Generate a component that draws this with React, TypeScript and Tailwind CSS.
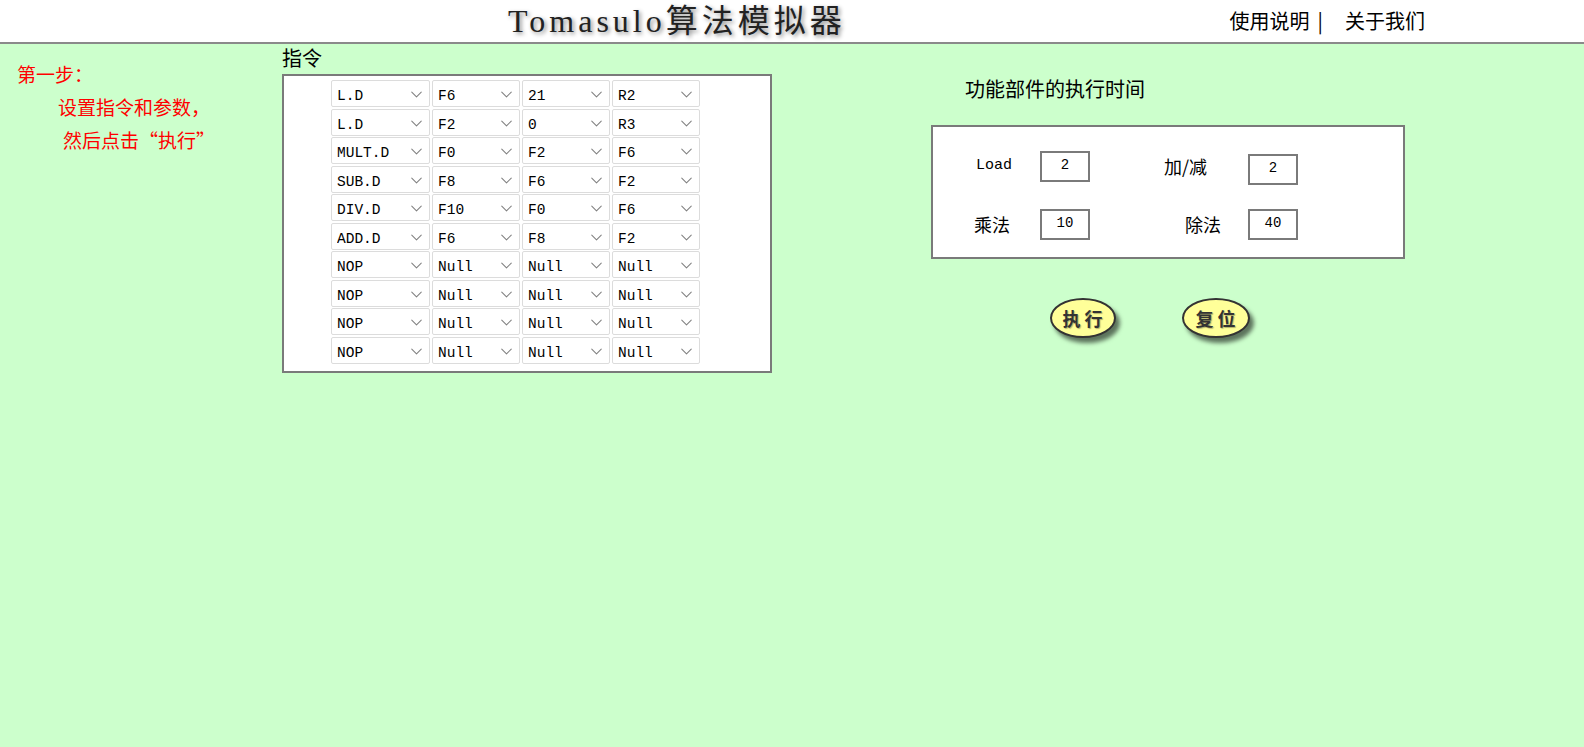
import React from "react";
import { ChevronDown } from "lucide-react";

const ops = ["NOP", "L.D", "S.D", "ADD.D", "SUB.D", "MULT.D", "DIV.D"];
const regs = ["Null", "F0", "F2", "F4", "F6", "F8", "F10", "F12", "F14", "R0", "R1", "R2", "R3", "0", "21"];

const rows = [
  ["L.D", "F6", "21", "R2"],
  ["L.D", "F2", "0", "R3"],
  ["MULT.D", "F0", "F2", "F6"],
  ["SUB.D", "F8", "F6", "F2"],
  ["DIV.D", "F10", "F0", "F6"],
  ["ADD.D", "F6", "F8", "F2"],
  ["NOP", "Null", "Null", "Null"],
  ["NOP", "Null", "Null", "Null"],
  ["NOP", "Null", "Null", "Null"],
  ["NOP", "Null", "Null", "Null"],
];

const Pick: React.FC<{ value: string; options: string[] }> = ({ value, options }) => (
  <div className="relative h-[27px] rounded-[2px] border border-[#dcdcdc] bg-white">
    <select
      defaultValue={value}
      className="h-full w-full appearance-none bg-transparent pl-[5px] pt-[2px] font-['Liberation_Mono',monospace] text-[14.5px] text-black outline-none"
    >
      {options.map((o) => (
        <option key={o} value={o}>
          {o}
        </option>
      ))}
    </select>
    <ChevronDown
      size={19}
      strokeWidth={1.3}
      className="pointer-events-none absolute right-[3px] top-[4px] text-[#808080]"
    />
  </div>
);

const TimeBox: React.FC<{ value: string; extra?: string }> = ({ value, extra }) => (
  <input
    defaultValue={value}
    className={
      "h-[31px] w-[50px] border-2 border-[#7a7a7a] bg-white pb-[4px] text-center font-['Liberation_Mono',monospace] text-[14px] text-black outline-none " +
      (extra ?? "")
    }
  />
);

const App: React.FC = () => {
  return (
    <div className="min-h-screen bg-[#ccffcc] font-['Noto_Sans_CJK_SC',sans-serif] text-black">
      {/* header */}
      <header className="flex h-[44px] items-center border-b-2 border-[#8a8a8a] bg-white">
        <h1 className="ml-[508px] font-['Liberation_Serif','Noto_Sans_CJK_SC',serif] text-[32px] leading-[42px] tracking-[4px] text-[#222] [text-shadow:2px_2px_4px_rgba(0,0,0,0.45)]">
          Tomasulo算法模拟器
        </h1>
        <nav className="ml-auto mr-[159px] flex items-center text-[20px] leading-[24px]">
          <a href="#">使用说明</a>
          <span className="ml-[8px]">|</span>
          <a href="#" className="ml-[22px]">
            关于我们
          </a>
        </nav>
      </header>

      <main className="flex items-start">
        {/* step hint */}
        <section className="w-[282px] shrink-0 pt-[13px] text-[19px] leading-[33px] text-[#ff0000]">
          <p className="pl-[17px]">第一步：</p>
          <p className="pl-[58px]">设置指令和参数，</p>
          <p className="pl-[63px]">然后点击“执行”</p>
        </section>

        {/* instructions */}
        <section className="w-[490px] shrink-0 pt-[4px]">
          <h2 className="mb-[6px] text-[20px] leading-[20px]">指令</h2>
          <div className="h-[299px] border-2 border-[#7a7a7a] bg-white pl-[47px] pt-[4px]">
            <div className="grid grid-cols-[99px_88px_88px_88px] gap-x-[2px] gap-y-[1.5px]">
              {rows.map((r, i) => (
                <React.Fragment key={i}>
                  <Pick value={r[0]} options={ops} />
                  <Pick value={r[1]} options={regs} />
                  <Pick value={r[2]} options={regs} />
                  <Pick value={r[3]} options={regs} />
                </React.Fragment>
              ))}
            </div>
          </div>
        </section>

        {/* unit timing */}
        <section className="ml-[159px] shrink-0 pt-[35px]">
          <h2 className="mb-[26px] pl-[34px] text-[20px] leading-[20px]">功能部件的执行时间</h2>
          <div className="h-[134px] w-[474px] border-2 border-[#7a7a7a] bg-white">
            <div className="mt-[21px] grid grid-cols-[107px_50px_158px_50px] items-center">
              <span className="pl-[43px] font-['Liberation_Mono',monospace] text-[15px]">Load</span>
              <TimeBox value="2" />
              <span className="pl-[74px] text-[18px]">加/减</span>
              <TimeBox value="2" extra="mt-[6px]" />
            </div>
            <div className="mt-[24px] grid grid-cols-[107px_50px_158px_50px] items-center">
              <span className="pl-[41px] text-[18px]">乘法</span>
              <TimeBox value="10" />
              <span className="pl-[95px] text-[18px]">除法</span>
              <TimeBox value="40" />
            </div>
          </div>

          <div className="mt-[39px] flex gap-[66px] pl-[119px]">
            <button className="h-[40px] w-[66px] rounded-[50%] border-2 border-[#333] bg-[#ffff99] pl-[3px] text-[18px] font-semibold tracking-[4px] text-[#333] shadow-[4px_5px_4px_rgba(0,0,0,0.55)] [text-shadow:1px_1px_1px_rgba(0,0,0,0.3)]">
              执行
            </button>
            <button className="h-[40px] w-[68px] rounded-[50%] border-2 border-[#333] bg-[#ffff99] pl-[3px] text-[18px] font-semibold tracking-[4px] text-[#333] shadow-[4px_5px_4px_rgba(0,0,0,0.55)] [text-shadow:1px_1px_1px_rgba(0,0,0,0.3)]">
              复位
            </button>
          </div>
        </section>
      </main>
    </div>
  );
};

export default App;
